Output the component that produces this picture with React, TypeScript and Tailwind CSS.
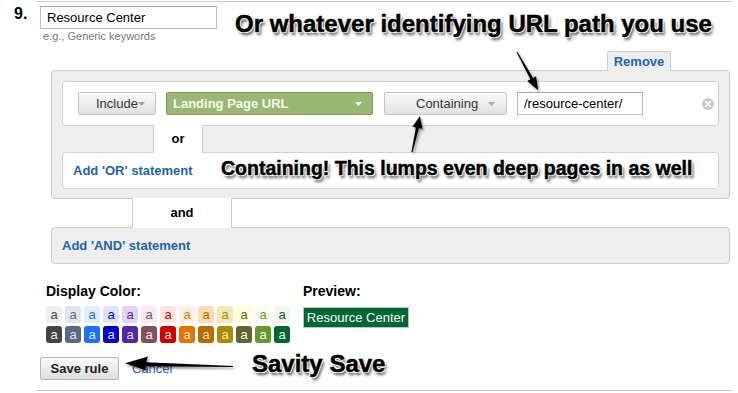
const SWATCHES_LIGHT = [
  "bg-[#eeeeee] text-[#444444]",
  "bg-[#dee5f2] text-[#5a6986]",
  "bg-[#e0ecff] text-[#206cff]",
  "bg-[#dfe2ff] text-[#0000cc]",
  "bg-[#e0d5f9] text-[#5229a3]",
  "bg-[#fde9f4] text-[#854f61]",
  "bg-[#ffe3e3] text-[#cc0000]",
  "bg-[#fff0e1] text-[#ec7000]",
  "bg-[#fadcb3] text-[#b36d00]",
  "bg-[#f3e7b3] text-[#ab8b00]",
  "bg-[#ffffd4] text-[#636330]",
  "bg-[#f9ffef] text-[#64992c]",
  "bg-[#f1f5ec] text-[#006633]",
];

const SWATCHES_DARK = [
  "bg-[#444444] text-[#eeeeee]",
  "bg-[#5a6986] text-[#dee5f2]",
  "bg-[#206cff] text-[#e0ecff]",
  "bg-[#0000cc] text-[#dfe2ff]",
  "bg-[#5229a3] text-[#e0d5f9]",
  "bg-[#854f61] text-[#fde9f4]",
  "bg-[#cc0000] text-[#ffe3e3]",
  "bg-[#ec7000] text-[#fff0e1]",
  "bg-[#b36d00] text-[#fadcb3]",
  "bg-[#ab8b00] text-[#f3e7b3]",
  "bg-[#636330] text-[#ffffd4]",
  "bg-[#64992c] text-[#f9ffef]",
  "bg-[#006633] text-[#f1f5ec]",
];

// screenshot callouts: heavy black text, white halo, soft grey drop shadow
const CALLOUT =
  "absolute whitespace-nowrap font-bold leading-none text-black [-webkit-text-stroke:0.5px_#000] [text-shadow:-1px_-1px_0_#fff,1px_-1px_0_#fff,-1px_1px_0_#fff,1px_1px_0_#fff,2px_3px_3px_rgba(0,0,0,0.7)]";

function Caret({ color }: { color: string }) {
  return (
    <svg width="7" height="4" viewBox="0 0 7 4" className="shrink-0">
      <polygon points="0,0 7,0 3.5,4" fill={color} />
    </svg>
  );
}

export default function App() {
  return (
    <div className="relative h-[393px] w-[738px] overflow-hidden bg-white font-['Liberation_Sans',Arial,sans-serif] text-[13px] text-[#222]">
      <div className="flex pt-px">
        {/* Row number */}
        <div className="w-[36px] shrink-0 pl-[14px] pt-[5px] text-[16px] font-bold leading-none text-black">
          9.
        </div>

        <div className="w-[697px] border-t border-[#cccccc]">
          {/* Rule name */}
          <div className="pl-[4px] pt-[4px]">
            <div className="flex h-[23px] w-[177px] items-center border border-[#bdbdbd] border-t-[#a3a3a3] pl-[6px] text-[13px] text-black">
              Resource Center
            </div>
            <div className="mt-px pl-[3px] text-[11px] leading-[13px] text-[#777777]">
              e.g., Generic keywords
            </div>
          </div>

          {/* Remove tab */}
          <div className="relative z-10 -mb-px ml-[571px] mt-[8px] flex h-[20px] w-[64px] items-center justify-center rounded-t-[3px] border border-b-0 border-[#cccccc] bg-[#eeeeee] text-[13px] font-bold text-[#1d64ad]">
            Remove
          </div>

          {/* Rule box */}
          <div className="ml-[15px] w-[679px] rounded-[4px] border border-[#cccccc] bg-[#eeeeee] px-[10px] pb-[9px] pt-[10px]">
            <div className="flex h-[45px] items-center rounded-[4px] border border-[#d2d2d2] bg-white pl-[15px]">
              <div className="flex h-[23px] w-[78px] items-center rounded-[2px] border border-[#c4c4c4] bg-linear-to-b from-[#fbfbfb] to-[#e1e1e1] pl-[17px] text-[13px] text-[#333333]">
                Include
                <Caret color="#a0a0a0" />
              </div>
              <div className="ml-[10px] flex h-[23px] w-[207px] items-center justify-between rounded-[2px] border border-[#7d9a5c] bg-[#9bb774] pl-[6px] pr-[10px] text-[13px] font-bold text-[#f6f8ee]">
                Landing Page URL
                <Caret color="#ffffff" />
              </div>
              <div className="ml-[11px] flex h-[23px] w-[123px] items-center rounded-[2px] border border-[#c4c4c4] bg-linear-to-b from-[#fbfbfb] to-[#e1e1e1] pl-[31px] text-[13px] text-[#333333]">
                Containing
                <span className="ml-[10px] flex">
                  <Caret color="#a8a8a8" />
                </span>
              </div>
              <div className="ml-[10px] flex h-[23px] w-[126px] items-center border border-[#bdbdbd] border-t-[#a3a3a3] pl-[6px] text-[13px] text-black">
                /resource-center/
              </div>
              <svg width="12" height="12" viewBox="0 0 12 12" className="ml-auto mr-[4px]">
                <circle cx="6" cy="6" r="6" fill="#cbcbcb" />
                <path d="M3.8 3.8 L8.2 8.2 M8.2 3.8 L3.8 8.2" stroke="#ffffff" strokeWidth="1.7" strokeLinecap="round" />
              </svg>
            </div>

            <div className="relative z-10 -my-px ml-[91px] flex h-[28px] w-[50px] items-center justify-center border-x border-[#d2d2d2] bg-white text-[13px] font-bold text-black">
              or
            </div>

            <div className="flex h-[37px] items-center rounded-[4px] border border-[#d2d2d2] bg-white pl-[10px] text-[13px] font-bold text-[#1d64ad]">
              Add 'OR' statement
            </div>
          </div>

          <div className="relative z-10 -my-px ml-[96px] flex h-[30px] w-[100px] items-center justify-center border-x border-[#cccccc] bg-white text-[13px] font-bold text-black">
            and
          </div>

          <div className="ml-[15px] flex h-[37px] w-[679px] items-center rounded-[4px] border border-[#cccccc] bg-[#eeeeee] pl-[10px] text-[13px] font-bold text-[#1d64ad]">
            Add 'AND' statement
          </div>

          {/* Colour + preview */}
          <div className="ml-[10px] mt-[19px] flex">
            <div className="w-[257px]">
              <div className="text-[14px] font-bold leading-[16px] text-black">Display Color:</div>
              <div className="mt-[7px] flex flex-col gap-[3px]">
                {[SWATCHES_LIGHT, SWATCHES_DARK].map((row, r) => (
                  <div key={r} className="flex gap-[3px]">
                    {row.map((cls) => (
                      <div
                        key={cls}
                        className={`flex h-[17px] w-[16px] items-center justify-center rounded-[3px] text-[13px] leading-none ${cls}`}
                      >
                        a
                      </div>
                    ))}
                  </div>
                ))}
              </div>
            </div>
            <div>
              <div className="text-[14px] font-bold leading-[16px] text-black">Preview:</div>
              <div className="mt-[8px] flex h-[21px] w-[106px] items-center justify-center border border-[#b8c8bc] bg-[#006633] text-[13px] text-white">
                Resource Center
              </div>
            </div>
          </div>

          {/* Actions */}
          <div className="ml-[4px] mt-[14px] flex items-center">
            <div className="flex h-[23px] w-[79px] items-center justify-center rounded-[2px] border border-[#b5b5b5] bg-linear-to-b from-[#fafafa] to-[#dedede] text-[13px] font-bold text-[#222222]">
              Save rule
            </div>
            <span className="ml-[13px] text-[13px] text-[#1d64ad]">Cancel</span>
          </div>

          <div className="mt-[10px] border-t border-[#cccccc]" />
        </div>
      </div>

      {/* Annotations */}
      <div className={`${CALLOUT} left-[235px] top-[12px] text-[24px]`}>
        Or whatever identifying URL path you use
      </div>
      <div className={`${CALLOUT} left-[221px] top-[159px] text-[19.5px]`}>
        Containing! This lumps even deep pages in as well
      </div>
      <div className={`${CALLOUT} left-[252px] top-[352px] text-[24px]`}>Savity Save</div>

      <svg className="pointer-events-none absolute left-0 top-0" width="738" height="393">
        <defs>
          <filter id="arrowShadow" x="-20%" y="-20%" width="140%" height="140%">
            <feDropShadow dx="1.5" dy="2" stdDeviation="1.2" floodColor="#000" floodOpacity="0.45" />
          </filter>
        </defs>
        <g fill="#000" filter="url(#arrowShadow)">
          <polygon points="516.6,52.2 530.4,79.3 527.3,81 538,90 536.1,76.2 533,77.9 517.4,51.8" />
          <polygon points="411.4,151.9 415.9,127.4 412.5,126.6 420,116 422.3,128.8 418.9,128 412.6,152.1" />
          <polygon points="125,363.3 148,356.5 146,362.3 233,366 233,367 146,366.3 145,370" />
        </g>
      </svg>
    </div>
  );
}
